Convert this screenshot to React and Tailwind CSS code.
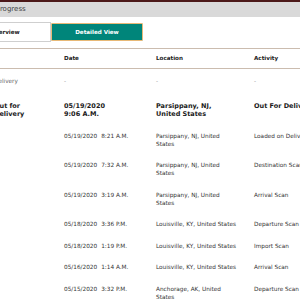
const rows = [
  { status: "Delivery", date: "-", time: "", location: "-", activity: "-", dim: true },
  {
    status: "Out for Delivery",
    date: "05/19/2020",
    time: "9:06 A.M.",
    location: "Parsippany, NJ, United States",
    activity: "Out For Delivery Today",
    bold: true,
  },
  { date: "05/19/2020", time: "8:21 A.M.", location: "Parsippany, NJ, United States", activity: "Loaded on Delivery Vehicle" },
  { date: "05/19/2020", time: "7:32 A.M.", location: "Parsippany, NJ, United States", activity: "Destination Scan" },
  { date: "05/19/2020", time: "3:19 A.M.", location: "Parsippany, NJ, United States", activity: "Arrival Scan" },
  { date: "05/18/2020", time: "3:36 P.M.", location: "Louisville, KY, United States", activity: "Departure Scan" },
  { date: "05/18/2020", time: "1:19 P.M.", location: "Louisville, KY, United States", activity: "Import Scan" },
  { date: "05/16/2020", time: "1:14 A.M.", location: "Louisville, KY, United States", activity: "Arrival Scan" },
  { date: "05/15/2020", time: "3:32 P.M.", location: "Anchorage, AK, United States", activity: "Departure Scan" },
];

const font = { fontFamily: '"DejaVu Sans", Verdana, sans-serif' };

export default function App() {
  return (
    <div className="w-[300px] h-[300px] overflow-hidden bg-white" style={font}>
      <div className="h-[2px] bg-[#4b1818]" />
      <div className="h-[15px] bg-[#d9d9d9] flex items-center overflow-hidden">
        <span className="ml-[-40px] whitespace-nowrap text-[7px] leading-none text-[#444]">Shipment Progress</span>
      </div>

      <div className="flex mt-[5px] ml-[-41px]">
        <button className="w-[92px] h-[20px] shrink-0 bg-white border border-[#cfcfcf] text-[5.6px] font-bold text-[#222]">
          Overview
        </button>
        <button className="w-[92px] h-[18px] mt-[1px] shrink-0 bg-[#00857a] border border-[#e8b977] rounded-[1px] text-[5.6px] font-bold text-white">
          Detailed View
        </button>
      </div>

      <div className="mt-[6px] ml-[-6px] w-[460px]">
        <div className="border-t border-b border-[#cbbcaf] h-[21px] grid grid-cols-[70px_92px_98px_200px] items-center text-[5.6px] font-bold text-[#222]">
          <span></span>
          <span>Date</span>
          <span>Location</span>
          <span>Activity</span>
        </div>

        {rows.map((r, i) => (
          <div
            key={i}
            className={
              "grid grid-cols-[70px_92px_98px_200px] items-start " +
              (i === 0 ? "pt-[7.5px] pb-[11px] " : "pt-[6.75px] pb-[6.75px] ") +
              (r.bold ? "text-[6.5px] font-bold text-[#1a1a1a] leading-[8px]" : "text-[5.75px] text-[#333] leading-[8px]")
            }
          >
            <span className={"pr-[20px] " + (r.dim ? "text-[#666]" : "")}>{r.status || ""}</span>
            {r.bold ? (
              <span className="pr-[22px]">
                {r.date}
                <br />
                {r.time}
              </span>
            ) : (
              <span className={"pr-[22px] whitespace-nowrap " + (r.dim ? "text-[#999]" : "")}>
                {r.date}
                {r.time && <span className="ml-[4px]">{r.time}</span>}
              </span>
            )}
            <span className={"pr-[18px] " + (r.dim ? "text-[#999]" : "")}>{r.location}</span>
            <span className={"whitespace-nowrap " + (r.dim ? "text-[#999]" : "")}>{r.activity}</span>
          </div>
        ))}
      </div>
    </div>
  );
}
